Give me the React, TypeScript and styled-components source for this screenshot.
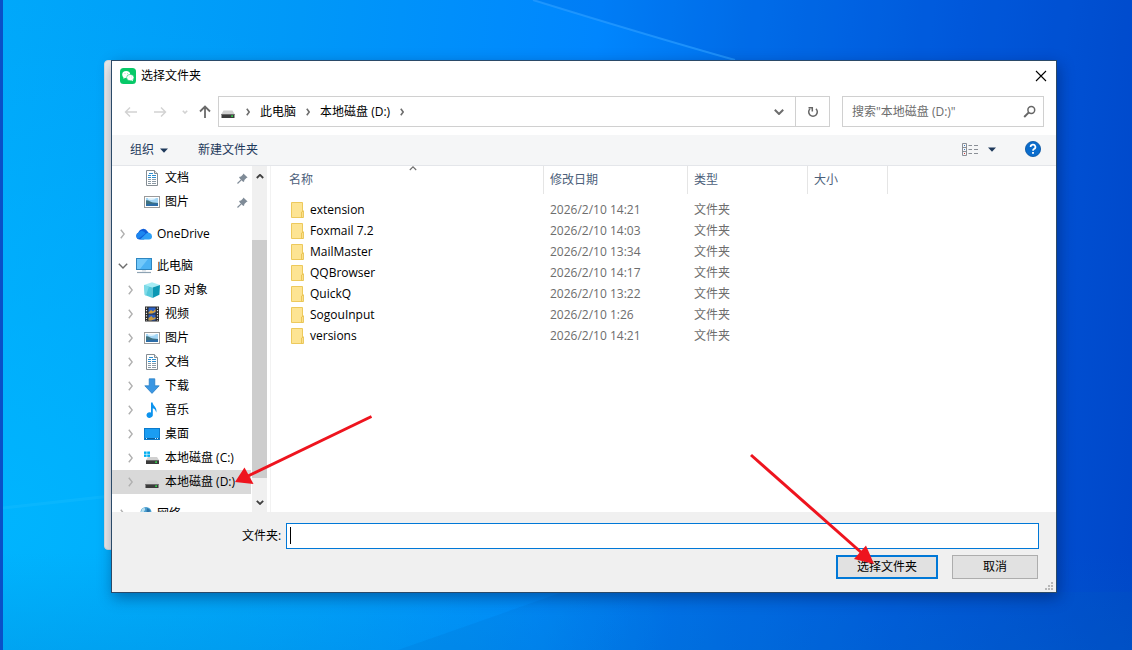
import React from "react";
import styled, { createGlobalStyle, css } from "styled-components";

const GlobalStyle = createGlobalStyle`
  * { box-sizing: border-box; }
  body {
    margin: 0;
    font-family: "Open Sans", "Noto Sans CJK SC", sans-serif;
    font-size: 12px;
    line-height: 16px;
    color: #000;
  }
  button, input { font: inherit; color: inherit; }
`;

const Desktop = styled.main`
  position: relative;
  display: flex;
  height: 100vh;
  min-height: 400px;
  padding: 60px 75px 57px 108px;
  border-left: 3px solid #0a50c8;
  overflow: hidden;
  background:
    linear-gradient(180deg, rgba(0, 190, 255, 0) 40%, rgba(0, 190, 255, 0.3) 100%) 0 0 / 45% 100% no-repeat,
    linear-gradient(96deg, #00a8fa 0%, #009af6 25%, #0088fc 50%, #0074ee 62%, #005cde 80%, #0048c8 100%);
  background:
    linear-gradient(180deg, rgba(0, 110, 190, 0) 85%, rgba(0, 110, 190, 0.18) 100%),
    radial-gradient(ellipse 60% 80% at 0% 80%, rgba(0, 184, 255, 0.8), rgba(0, 170, 255, 0) 100%),
    linear-gradient(96deg, #00a8fa 0%, #0098f8 25%, #0086fe 50%, #0072ee 62%, #005ade 80%, #0046c8 100%);
`;

const Wallpaper = styled.svg`
  position: absolute;
  inset: 0;
  width: 100%;
  height: 100%;
`;

const Stage = styled.div`
  position: relative;
  display: flex;
  flex: 1;
  min-width: 0;
`;

const BackWindow = styled.div`
  position: absolute;
  top: 0;
  bottom: 43px;
  left: -7px;
  width: 40px;
  border-radius: 4px;
  background: #ececec;
  border: 1px solid #d4dade;
`;

const Dialog = styled.section`
  position: relative;
  display: flex;
  flex: 1;
  flex-direction: column;
  min-width: 0;
  border: 1px solid #2b4a68;
  background: #fff;
  box-shadow: 2px 5px 14px rgba(0, 20, 70, 0.42);
`;

const TitleBar = styled.header`
  display: flex;
  align-items: center;
  gap: 5px;
  height: 29px;
  padding: 0 8px;
`;

const Title = styled.h1`
  flex: 1;
  margin: 0;
  font-size: 12px;
  font-weight: 400;
`;

const IconButton = styled.button<{ $w?: number }>`
  display: flex;
  align-items: center;
  justify-content: center;
  flex: none;
  width: ${(p) => p.$w ?? 16}px;
  height: 20px;
  padding: 0;
  border: 0;
  background: none;
`;

const NavRow = styled.div`
  display: flex;
  align-items: center;
  padding: 6px 12px 8px;
`;

const History = styled.div`
  display: flex;
  align-items: center;
  width: 94px;
`;

const AddressBar = styled.nav`
  display: flex;
  flex: 1;
  align-items: center;
  height: 31px;
  margin-right: 12px;
  border: 1px solid #d0d0d0;
`;

const Crumb = styled.button`
  padding: 0;
  border: 0;
  background: none;
  white-space: nowrap;
`;

const Crumbs = styled.div`
  display: flex;
  flex: 1;
  align-items: center;
  gap: 10px;
  padding-left: 1px;
`;

const RefreshCell = styled.div`
  display: flex;
  align-items: center;
  justify-content: center;
  align-self: stretch;
  width: 34px;
  border-left: 1px solid #d0d0d0;
`;

const SearchBox = styled.label`
  display: flex;
  align-items: center;
  width: 202px;
  height: 31px;
  padding: 0 6px 0 9px;
  border: 1px solid #d0d0d0;
`;

const SearchInput = styled.input`
  flex: 1;
  min-width: 0;
  padding: 0;
  border: 0;
  outline: 0;
  background: none;
  &::placeholder { color: #6d6d6d; opacity: 1; }
`;

const Toolbar = styled.div`
  display: flex;
  align-items: center;
  height: 31px;
  padding: 0 15px 2px 18px;
  border-bottom: 1px solid #e4e6ea;
  background: #f5f6f7;
  color: #1e395b;
`;

const ToolButton = styled.button`
  display: flex;
  align-items: center;
  gap: 6px;
  height: 24px;
  margin-right: 30px;
  padding: 2px 0 0;
  border: 0;
  background: none;
`;

const Spacer = styled.div`
  flex: 1;
`;

const HelpSlot = styled.div`
  margin-left: 20px;
`;

const Content = styled.div`
  display: flex;
  flex: 1 1 0;
  min-height: 0;
  overflow: hidden;
`;

const TreePane = styled.nav`
  flex: none;
  width: 140px;
  overflow: hidden;
`;

const TreeGroup = styled.ul`
  margin: 0 0 8px;
  padding: 0;
  list-style: none;
`;

const TreeRow = styled.li<{ $root?: boolean; $selected?: boolean }>`
  display: flex;
  align-items: center;
  gap: 5px;
  width: 139px;
  height: 24px;
  padding-left: ${(p) => (p.$root ? 4 : 12)}px;
  white-space: nowrap;
  ${(p) => p.$selected && css`background: #d9d9d9;`}
`;

const TreeIcons = styled.span`
  display: flex;
  flex: none;
  align-items: center;
  gap: 7px;
`;

const Expander = styled.span`
  display: flex;
  align-items: center;
  justify-content: center;
  flex: none;
  width: 13px;
`;

const TreeLabel = styled.span`
  flex: 1;
`;

const PinSlot = styled.span`
  display: flex;
  flex: none;
  padding-right: 3px;
`;

const Scrollbar = styled.div`
  display: flex;
  flex: none;
  flex-direction: column;
  width: 15px;
  background: #f0f0f0;
`;

const ScrollThumb = styled.div`
  flex: 238;
  background: #cdcdcd;
`;

const ScrollGap = styled.div<{ $grow: number }>`
  flex: ${(p) => p.$grow};
`;

const ListPane = styled.div`
  flex: 1;
  min-width: 0;
  margin-left: 3px;
  border-left: 1px solid #f2f2f2;
`;

const FileTable = styled.table`
  width: 100%;
  table-layout: fixed;
  border-collapse: separate;
  border-spacing: 0;
  tbody::before { content: ""; display: block; height: 5px; }
`;

const HeadCell = styled.th<{ $w?: number; $first?: boolean }>`
  position: relative;
  width: ${(p) => (p.$w ? p.$w + "px" : "auto")};
  height: 28px;
  padding: 0 0 0 ${(p) => (p.$first ? 18 : 6)}px;
  border-right: ${(p) => (p.$w ? "1px solid #e5e5e5" : "0")};
  color: #4c607a;
  font-weight: 400;
  text-align: left;
`;

const SortMark = styled.span`
  position: absolute;
  top: 0;
  left: 138px;
  display: flex;
`;

const Cell = styled.td<{ $first?: boolean }>`
  height: 21px;
  padding: 0 0 0 ${(p) => (p.$first ? 20 : 6)}px;
  color: ${(p) => (p.$first ? "#000" : "#6d6d6d")};
  white-space: nowrap;
`;

const FileName = styled.span`
  display: flex;
  align-items: center;
  gap: 5px;
`;

const Footer = styled.footer`
  position: relative;
  display: flex;
  flex-direction: column;
  gap: 6px;
  height: 80px;
  padding: 11px 17px 0 130px;
  background: #f0f0f0;
`;

const FieldRow = styled.label`
  display: flex;
  align-items: center;
  gap: 5px;
`;

const FieldBox = styled.span`
  display: flex;
  flex: 1;
  align-items: center;
  height: 26px;
  padding: 0 3px 2px;
  border: 1px solid #0078d7;
  background: #fff;
`;

const Caret = styled.span`
  width: 1px;
  height: 17px;
  background: #000;
`;

const FieldInput = styled.input`
  flex: 1;
  min-width: 0;
  padding: 0;
  border: 0;
  outline: 0;
  background: none;
`;

const Actions = styled.div`
  display: flex;
  justify-content: flex-end;
  gap: 14px;
  padding-right: 1px;
`;

const ActionButton = styled.button<{ $primary?: boolean }>`
  width: ${(p) => (p.$primary ? 102 : 86)}px;
  height: 24px;
  padding: 0;
  border: ${(p) => (p.$primary ? "2px solid #0078d7" : "1px solid #adadad")};
  background: #e1e1e1;
`;

const Grip = styled.svg`
  position: absolute;
  right: 3px;
  bottom: 2px;
`;

const Annotations = styled.svg`
  position: absolute;
  top: 0;
  left: -3px;
  pointer-events: none;
`;

type ChevronProps = { dir: "right" | "down" | "up"; color?: string; size?: number; stroke?: number };

function Chevron({ dir, color = "#6d6d6d", size = 5, stroke = 1.6 }: ChevronProps) {
  const h = size * 2;
  const shapes = {
    right: { w: size, h, d: `M0.8 0.8L${size - 0.8} ${size}L0.8 ${h - 0.8}` },
    down: { w: h, h: size + 1, d: `M0.8 0.8L${size} ${size}L${h - 0.8} 0.8` },
    up: { w: h, h: size + 1, d: `M0.8 ${size}L${size} 0.8L${h - 0.8} ${size}` },
  };
  const s = shapes[dir];
  return (
    <svg width={s.w} height={s.h} viewBox={`0 0 ${s.w} ${s.h}`} fill="none" stroke={color} strokeWidth={stroke}>
      <path d={s.d} />
    </svg>
  );
}

const Triangle = () => (
  <svg width="8" height="5" viewBox="0 0 8 5"><path d="M0 0.5H8L4 4.8Z" fill="#1e395b" /></svg>
);

const WeChatIcon = () => (
  <svg width="16" height="16" viewBox="0 0 16 16">
    <rect width="16" height="16" rx="3.5" fill="#07c968" />
    <ellipse cx="6.2" cy="6.6" rx="4" ry="3.5" fill="#fff" />
    <path d="M3.6 8.6L3.4 10.8L5.6 9.8Z" fill="#fff" />
    <ellipse cx="10.3" cy="9.6" rx="3.7" ry="3.2" fill="#fff" stroke="#07c968" strokeWidth="0.6" />
    <path d="M11.2 12.3L13 13.3L12.6 11.2Z" fill="#fff" />
    <circle cx="5" cy="5.6" r="0.5" fill="#8be3b5" /><circle cx="7.6" cy="5.6" r="0.5" fill="#8be3b5" />
    <circle cx="9.1" cy="8.9" r="0.45" fill="#8be3b5" /><circle cx="11.5" cy="8.9" r="0.45" fill="#8be3b5" />
  </svg>
);

const DriveIcon = ({ system }: { system?: boolean }) => (
  <svg width="16" height="16" viewBox="0 0 16 16">
    {system && (
      <g fill="#00adef">
        <rect x="0" y="1.5" width="2.6" height="2.4" /><rect x="3.2" y="1.5" width="2.8" height="2.4" />
        <rect x="0" y="4.5" width="2.6" height="2.4" /><rect x="3.2" y="4.5" width="2.8" height="2.4" />
      </g>
    )}
    <path d={system ? "M4 7H13L15 10H2Z" : "M3.5 6.5H12.5L14.5 10H1.5Z"} fill="#d0d0d0" />
    <rect x={system ? 2 : 1.5} y="10" width="13" height="4" fill="#3b3b3b" />
    <rect x={system ? 2 : 1.5} y="10" width="13" height="1" fill="#6a6a6a" />
    <rect x="11.2" y="11.4" width="1.8" height="1.5" fill="#2ee04a" />
  </svg>
);

const DocIcon = () => (
  <svg width="16" height="16" viewBox="0 0 16 16">
    <path d="M2.5 0.5H10.5L13.5 3.5V15.5H2.5Z" fill="#fff" stroke="#858d93" />
    <path d="M10.5 0.5V3.5H13.5" fill="#dfe4e8" stroke="#858d93" />
    <path d="M5 3.5H9M4 5.5H7M8 5.5H12M4 7.500H7M8 7.500H12" stroke="#2e8fd0" />
    <path d="M4 9.500H7M8 9.500H12M4 11.500H7M8 11.500H12M4 13.500H7M8 13.500H12" stroke="#8b9aa5" />
  </svg>
);

const PictureIcon = () => (
  <svg width="16" height="16" viewBox="0 0 16 16">
    <rect x="0.5" y="2.5" width="15" height="11" fill="#fff" stroke="#9a9a9a" />
    <rect x="2" y="4" width="12" height="8" fill="#a4d6f5" />
    <path d="M2 6.5C4 5.5 6 8 9 8.6L14 9V12H2Z" fill="#3f7180" />
    <path d="M4 4H12C11 6 7 6.5 4 5.5Z" fill="#e2f4fd" />
    <path d="M2 10.5C6 9.5 10 10 14 9.6V12H2Z" fill="#2c6da8" />
  </svg>
);

const CloudIcon = () => (
  <svg width="16" height="16" viewBox="0 0 16 16">
    <path d="M3.6 13.5A3.6 3.6 0 0 1 2.4 6.6A5 5 0 0 1 11.6 5.4L13 7.4L8 13.5Z" fill="#0f5fd8" />
    <path d="M2.2 6.8A4.6 4.6 0 0 1 8.200 5.800L9.500 7.600L2 12.900A3.600 3.600 0 0 1 2.200 6.800Z" fill="#1b86f0" />
    <path d="M4 13.500L10 7.800A3.500 3.500 0 0 1 16 10.300A3.100 3.100 0 0 1 13 13.500Z" fill="#2ea0f6" />
  </svg>
);

const ComputerIcon = () => (
  <svg width="16" height="16" viewBox="0 0 16 16">
    <rect x="0.5" y="0.5" width="15" height="11" fill="#4bb2f4" stroke="#2e86c0" />
    <path d="M1 1H12L4 11H1Z" fill="#72c8fa" />
    <path d="M6 12H10V13.5H6Z" fill="#dde3e8" />
    <path d="M1 14.5H15" stroke="#8ea3b3" strokeWidth="1.2" />
  </svg>
);

const CubeIcon = () => (
  <svg width="16" height="16" viewBox="0 0 16 16">
    <path d="M0 3L8 0.2L16 3L8.6 5.6Z" fill="#a6edf5" />
    <path d="M0 3L8.6 5.6V16L0.8 13Z" fill="#55c9db" />
    <path d="M8.6 5.6L16 3L15.4 12.8L8.6 16Z" fill="#0b98b4" />
    <path d="M0 3L5 4.5L2 13.4L0.8 13Z" fill="#7edbe8" />
  </svg>
);

const FilmIcon = () => (
  <svg width="16" height="16" viewBox="0 0 16 16">
    <rect x="1" y="0.5" width="14" height="15" fill="#2b2b2b" />
    <path d="M2.5 1.5V15M13.5 1.5V15" stroke="#e8e8e8" strokeWidth="1.2" strokeDasharray="1.2 1.4" />
    <rect x="4.5" y="1.5" width="7" height="6" fill="#2c62c8" />
    <rect x="4.5" y="8.5" width="7" height="6" fill="#2c5fc0" />
    <path d="M4.5 6.5L7 4L9 5.5L11.5 3V6L8 7.5H4.5Z" fill="#d9a13a" />
    <path d="M4.5 12L7.5 10L9 12L11.5 11V13L7 14.5H4.5Z" fill="#c99a3e" />
  </svg>
);

const DownloadIcon = () => (
  <svg width="16" height="16" viewBox="0 0 16 16">
    <path d="M5.2 0.8H10.8V7.8H15.2L8 15.4L0.8 7.8H5.2Z" fill="#3b97e3" stroke="#1f78c2" strokeWidth="0.7" />
  </svg>
);

const MusicIcon = () => (
  <svg width="16" height="16" viewBox="0 0 16 16">
    <path d="M7 0.5H8.6C8.8 4 13.6 5 12.2 10.6C11.8 8 10.4 6.6 8.8 6.2V12.4A3.2 2.8 -18 1 1 7 10.4Z" fill="#0c93ee" />
  </svg>
);

const DesktopIcon = () => (
  <svg width="16" height="16" viewBox="0 0 16 16">
    <rect x="0.5" y="2.5" width="15" height="11" fill="#1a9df2" stroke="#0b7acc" />
    <path d="M1 12.5H15" stroke="#0a5f9f" />
    <path d="M2 12.5H4M11 12.5H14" stroke="#cdeaff" strokeDasharray="1 1" />
  </svg>
);

const GlobeIcon = () => (
  <svg width="16" height="16" viewBox="0 0 16 16">
    <circle cx="10" cy="6.5" r="5.5" fill="#4a9fd0" />
    <path d="M6 3C8 1 9.5 2 9 4L7 7L5 6Z" fill="#b7dff0" />
    <path d="M11 2L14 4L13 8L10.5 6Z" fill="#2a73a8" />
    <rect x="0" y="9" width="9" height="6" fill="#64b5e8" />
  </svg>
);

const PinIcon = () => (
  <svg width="11" height="11" viewBox="0 0 11 11">
    <path d="M6.4 0.4L10.6 4.6L9.4 5L7.4 7L7 9L5.4 8.2L2.8 5.6L2 4L4 3.6L6 1.6Z" fill="#7f8b97" />
    <path d="M4.2 6.8L0.5 10.5" stroke="#7f8b97" strokeWidth="1.2" />
  </svg>
);

const FolderIcon = () => (
  <svg width="14" height="16" viewBox="0 0 14 16">
    <path d="M0.500 0.500H11.500V15.500H0.500Z" fill="#fde493" stroke="#edc95c" />
    <path d="M10.500 15.500V10L12.500 8.800V15.500Z" fill="#fbe08a" stroke="#e6bf4a" strokeWidth="0.8" />
  </svg>
);

type TreeItem = {
  label: string;
  icon: React.ReactNode;
  root?: boolean;
  open?: boolean;
  pinned?: boolean;
  selected?: boolean;
};

const treeGroups: TreeItem[][] = [
  [
    { label: "文档", icon: <DocIcon />, pinned: true },
    { label: "图片", icon: <PictureIcon />, pinned: true },
  ],
  [{ label: "OneDrive", icon: <CloudIcon />, root: true }],
  [
    { label: "此电脑", icon: <ComputerIcon />, root: true, open: true },
    { label: "3D 对象", icon: <CubeIcon /> },
    { label: "视频", icon: <FilmIcon /> },
    { label: "图片", icon: <PictureIcon /> },
    { label: "文档", icon: <DocIcon /> },
    { label: "下载", icon: <DownloadIcon /> },
    { label: "音乐", icon: <MusicIcon /> },
    { label: "桌面", icon: <DesktopIcon /> },
    { label: "本地磁盘 (C:)", icon: <DriveIcon system /> },
    { label: "本地磁盘 (D:)", icon: <DriveIcon />, selected: true },
  ],
  [{ label: "网络", icon: <GlobeIcon />, root: true }],
];

const folders = [
  ["extension", "2026/2/10 14:21"],
  ["Foxmail 7.2", "2026/2/10 14:03"],
  ["MailMaster", "2026/2/10 13:34"],
  ["QQBrowser", "2026/2/10 14:17"],
  ["QuickQ", "2026/2/10 13:22"],
  ["SogouInput", "2026/2/10 1:26"],
  ["versions", "2026/2/10 14:21"],
];

export default function App() {
  return (
    <>
      <GlobalStyle />
      <Desktop>
        <Wallpaper viewBox="0 0 1129 650" preserveAspectRatio="none">
          <path d="M530 0Q640 34 732 60H1129V0Z" fill="#0050d0" opacity="0.16" />
          <path d="M530 0Q640 34 732 60" fill="none" stroke="#2a9cff" strokeWidth="2" opacity="0.7" />
          <path d="M0 508L108 496" stroke="#20c0ff" strokeWidth="3" opacity="0.3" />
          <path d="M395 650L560 592H1129V650Z" fill="#0060c0" opacity="0.14" />
        </Wallpaper>
        <Stage>
          <BackWindow />
          <Dialog aria-label="选择文件夹">
            <TitleBar>
              <WeChatIcon />
              <Title>选择文件夹</Title>
              <IconButton aria-label="关闭" $w={14}>
                <svg width="12" height="12" viewBox="0 0 12 12" stroke="#000" strokeWidth="1.1"><path d="M1 1L11 11M11 1L1 11" /></svg>
              </IconButton>
            </TitleBar>
            <NavRow>
              <History>
                <IconButton aria-label="后退" $w={14} disabled>
                  <svg width="14" height="12" viewBox="0 0 14 12" fill="none" stroke="#d2d2d2" strokeWidth="1.4"><path d="M13 6H1.5M6 1.5L1.5 6L6 10.5" /></svg>
                </IconButton>
                <IconButton aria-label="前进" $w={44} disabled>
                  <svg width="14" height="12" viewBox="0 0 14 12" fill="none" stroke="#d2d2d2" strokeWidth="1.4"><path d="M1 6H12.5M8 1.5L12.5 6L8 10.5" /></svg>
                </IconButton>
                <IconButton aria-label="最近位置" $w={6} disabled>
                  <Chevron dir="down" color="#d2d2d2" size={3} />
                </IconButton>
                <IconButton aria-label="上移" $w={34}>
                  <svg width="14" height="14" viewBox="0 0 14 14" fill="none" stroke="#6a6a6a" strokeWidth="1.8"><path d="M7 13V2M2 6.5L7 1.5L12 6.5" /></svg>
                </IconButton>
              </History>
              <AddressBar aria-label="地址">
                <Crumbs>
                  <DriveIcon />
                  <Chevron dir="right" size={4} />
                  <Crumb>此电脑</Crumb>
                  <Chevron dir="right" size={4} />
                  <Crumb>本地磁盘 (D:)</Crumb>
                  <Chevron dir="right" size={4} />
                </Crumbs>
                <IconButton aria-label="历史地址" $w={32}><Chevron dir="down" stroke={2} /></IconButton>
                <RefreshCell>
                  <IconButton aria-label="刷新">
                    <svg width="12" height="12" viewBox="0 0 12 12" fill="none" stroke="#666" strokeWidth="1.5"><path d="M9 2.8A4.3 4.3 0 1 1 3 2.8" /><path d="M1.500 1.700H5.300V5.500" /></svg>
                  </IconButton>
                </RefreshCell>
              </AddressBar>
              <SearchBox>
                <SearchInput aria-label="搜索" placeholder={'搜索"本地磁盘 (D:)"'} />
                <svg width="14" height="14" viewBox="0 0 14 14" fill="none" stroke="#666"><circle cx="8.3" cy="5" r="3.4" strokeWidth="1.5" /><path d="M5.8 7.4L1.2 12" strokeWidth="2" /></svg>
              </SearchBox>
            </NavRow>
            <Toolbar>
              <ToolButton>组织<Triangle /></ToolButton>
              <ToolButton>新建文件夹</ToolButton>
              <Spacer />
              <IconButton aria-label="视图" $w={17}>
                <svg width="17" height="13" viewBox="0 0 17 13" fill="none">
                  <path d="M0.5 0.5H4.5V12.5H0.5ZM0.5 4.5H4.5M0.5 8.5H4.5" stroke="#8a8f96" />
                  <path d="M6.5 2.5H10M12 2.5H16M6.5 6.5H10M12 6.5H16M6.5 10.5H10M12 10.5H16" stroke="#8a8f96" />
                  <path d="M2 2.5H3M2 6.5H3" stroke="#3a7cc8" /><path d="M2 10.5H3" stroke="#d23a3a" />
                </svg>
              </IconButton>
              <IconButton aria-label="更多视图" $w={26}><Triangle /></IconButton>
              <HelpSlot>
                <IconButton aria-label="帮助">
                  <svg width="16" height="16" viewBox="0 0 16 16">
                    <circle cx="8" cy="8" r="7.6" fill="#0a6ccc" stroke="#0552a0" strokeWidth="0.8" />
                    <path d="M5.6 6A2.4 2.3 0 1 1 9 8C8.2 8.5 8 8.8 8 9.8" fill="none" stroke="#fff" strokeWidth="1.7" />
                    <rect x="7.1" y="11" width="1.8" height="1.8" fill="#fff" />
                  </svg>
                </IconButton>
              </HelpSlot>
            </Toolbar>
            <Content>
              <TreePane aria-label="文件夹树">
                {treeGroups.map((group, g) => (
                  <TreeGroup key={g}>
                    {group.map((item) => (
                      <TreeRow key={item.label} $root={item.root} $selected={item.selected}>
                        <TreeIcons>
                          <Expander>
                            {!item.pinned && (
                              <Chevron dir={item.open ? "down" : "right"} color={item.open ? "#6d6d6d" : "#b0b0b0"} size={5} stroke={1.4} />
                            )}
                          </Expander>
                          {item.icon}
                        </TreeIcons>
                        <TreeLabel>{item.label}</TreeLabel>
                        {item.pinned && <PinSlot><PinIcon /></PinSlot>}
                      </TreeRow>
                    ))}
                  </TreeGroup>
                ))}
              </TreePane>
              <Scrollbar>
                <IconButton aria-label="向上滚动" $w={15}><Chevron dir="up" color="#404040" size={4} stroke={1.8} /></IconButton>
                <ScrollGap $grow={54} />
                <ScrollThumb />
                <ScrollGap $grow={14} />
                <IconButton aria-label="向下滚动" $w={15}><Chevron dir="down" color="#404040" size={4} stroke={1.8} /></IconButton>
              </Scrollbar>
              <ListPane>
                <FileTable>
                  <thead>
                    <tr>
                      <HeadCell $w={273} $first>名称<SortMark><Chevron dir="up" size={4} stroke={1.1} /></SortMark></HeadCell>
                      <HeadCell $w={144}>修改日期</HeadCell>
                      <HeadCell $w={120}>类型</HeadCell>
                      <HeadCell $w={80}>大小</HeadCell>
                      <HeadCell />
                    </tr>
                  </thead>
                  <tbody>
                    {folders.map(([name, date]) => (
                      <tr key={name}>
                        <Cell $first><FileName><FolderIcon />{name}</FileName></Cell>
                        <Cell>{date}</Cell>
                        <Cell>文件夹</Cell>
                        <Cell />
                        <Cell />
                      </tr>
                    ))}
                  </tbody>
                </FileTable>
              </ListPane>
            </Content>
            <Footer>
              <FieldRow>
                文件夹:
                <FieldBox><Caret /><FieldInput type="text" /></FieldBox>
              </FieldRow>
              <Actions>
                <ActionButton $primary>选择文件夹</ActionButton>
                <ActionButton>取消</ActionButton>
              </Actions>
              <Grip width="8" height="8" viewBox="0 0 8 8" fill="#b8b8b8">
                <path d="M6 0h2v2h-2zM3 3h2v2h-2zM6 3h2v2h-2zM0 6h2v2h-2zM3 6h2v2h-2zM6 6h2v2h-2z" />
              </Grip>
            </Footer>
          </Dialog>
        </Stage>
        <Annotations width="1132" height="650" viewBox="0 0 1132 650" fill="#ee141e" stroke="#ee141e">
          <path d="M371.5 416.5L248 476" strokeWidth="3" />
          <path d="M235 482L244.5 467.5L253.5 484Z" stroke="none" />
          <path d="M751 455L863 554" strokeWidth="3" />
          <path d="M874 564L854 559L866 545.5Z" stroke="none" />
        </Annotations>
      </Desktop>
    </>
  );
}
